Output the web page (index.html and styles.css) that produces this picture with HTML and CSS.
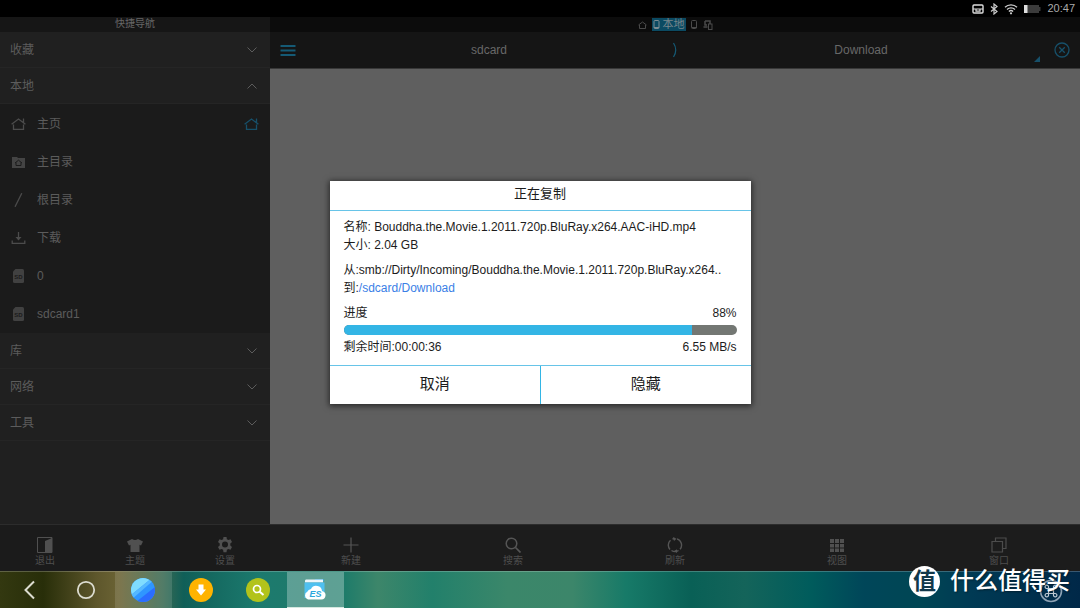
FILE: index.html
```html
<!DOCTYPE html>
<html lang="zh-CN">
<head>
<meta charset="utf-8">
<title>文件管理器</title>
<link rel="stylesheet" href="styles.css">
</head>
<body>
<div class="screen">
  <header class="status">
    <svg width="12" height="10" viewBox="0 0 12 10"><rect x="1" y="1" width="10" height="8" rx="1" fill="none" stroke="#ddd" stroke-width="1.400"/><path d="M1 5h10M4 5v2.200h4V5" fill="none" stroke="#ddd" stroke-width="1.200"/></svg>
    <svg width="8" height="12" viewBox="0 0 8 12"><path d="M1 3.500l6 5-3 2.500V1l3 2.500-6 5" fill="none" stroke="#ccc" stroke-width="1.200"/></svg>
    <svg width="14" height="12" viewBox="0 0 14 12"><g fill="none" stroke="#ccc" stroke-width="1.300"><path d="M1 4.300a8.500 8.500 0 0 1 12 0M3 6.500a5.700 5.700 0 0 1 8 0M4.900 8.500a3 3 0 0 1 4.200 0"/></g><circle cx="7" cy="10.300" r="1.100" fill="#ccc"/></svg>
    <svg width="17" height="10" viewBox="0 0 17 10"><path d="M0 1h15v2h1.500v4H15v2H0z" fill="#3b3b3b"/><path d="M0 1h3.500v8H0z" fill="#ddd"/></svg>
    <time>20:47</time>
  </header>

  <main class="app">
    <nav class="side">
      <h2 class="side-title">快捷导航</h2>
      <button class="group">收藏<svg width="10" height="6" viewBox="0 0 10 6"><path d="M.5.5L5 5 9.500.5"/></svg></button>
      <button class="group">本地<svg width="10" height="6" viewBox="0 0 10 6"><path d="M.5 5.500L5 1l4.500 4.500"/></svg></button>
      <ul class="items">
        <li><a href="#home"><svg class="line" width="15" height="14" viewBox="0 0 15 14"><path d="M.6 7.300L7.500 2l6.900 5.300M2.500 7.500v4.800h10V7.500M12.500 5.500V1.500"/></svg>主页<svg class="line blue" width="15" height="14" viewBox="0 0 15 14"><path d="M.6 7.300L7.500 2l6.900 5.300M2.500 7.500v4.800h10V7.500M12.500 5.500V1.500"/></svg></a></li>
        <li><a href="#main"><svg width="15" height="14" viewBox="0 0 15 14"><path d="M1 2h5l1 1h7v10H1z" fill="#444"/><path d="M4 8l3.500-2.800L11 8M5 7.500v3h5v-3" fill="none" stroke="#1b1b1b"/></svg>主目录</a></li>
        <li><a href="#root"><svg class="line" width="15" height="14" viewBox="0 0 15 14"><path d="M4 13.800L10.800.2"/></svg>根目录</a></li>
        <li><a href="#down"><svg class="line" width="15" height="14" viewBox="0 0 15 14"><path d="M1.200 9.500v2.800h12.600V9.500M7.500 1V7"/><path d="M4.500 6h6l-3 3.500z" fill="#4c4c4c" stroke="none"/></svg>下载</a></li>
        <li><a href="#sd0"><svg width="15" height="14" viewBox="0 0 15 14"><path d="M4.500 0h7q1.500 0 1.500 1.500v11q0 1.500-1.500 1.500h-8q-1.500 0-1.500-1.500V2.500z" fill="#414141"/><text x="7.500" y="9.500" class="sd">SD</text></svg>0</a></li>
        <li><a href="#sd1"><svg width="15" height="14" viewBox="0 0 15 14"><path d="M4.500 0h7q1.500 0 1.500 1.500v11q0 1.500-1.500 1.500h-8q-1.500 0-1.500-1.500V2.500z" fill="#414141"/><text x="7.500" y="9.500" class="sd">SD</text></svg>sdcard1</a></li>
      </ul>
      <button class="group">库<svg width="10" height="6" viewBox="0 0 10 6"><path d="M.5.5L5 5 9.500.5"/></svg></button>
      <button class="group">网络<svg width="10" height="6" viewBox="0 0 10 6"><path d="M.5.5L5 5 9.500.5"/></svg></button>
      <button class="group">工具<svg width="10" height="6" viewBox="0 0 10 6"><path d="M.5.5L5 5 9.500.5"/></svg></button>
      <div class="tools side-tools">
        <button><svg width="16" height="16" viewBox="0 0 16 16"><path d="M.5.500h14.500v15H.5z" fill="none" stroke="#505050"/><path d="M8 4l7-3v14.500H8z" fill="#505050"/></svg>退出</button>
        <button><svg width="16" height="16" viewBox="0 0 16 16"><path d="M5 2q3 2 6 0l5 2.500-2 4-1.500-.8V15h-9V7.700L2 8.500l-2-4z" fill="#505050"/></svg>主题</button>
        <button><svg width="16" height="16" viewBox="0 0 16 16"><path d="M6.500 0h3l.4 2.200 1.500.9 2.100-.8L15 4.900l-1.700 1.500v2.200l1.700 1.500-1.500 2.600-2.100-.8-1.500.9-.4 2.400h-3l-.4-2.400-1.500-.9-2.100.8L1 10.100l1.700-1.500V6.400L1 4.900l1.500-2.600 2.100.8 1.500-.9z" fill="#505050"/><circle cx="8" cy="7.500" r="3" fill="#1b1b1b"/></svg>设置</button>
      </div>
    </nav>

    <section class="content">
      <div class="tabs">
        <svg width="9" height="8" viewBox="0 0 9 8"><path d="M.5 4l4-3 4 3M1.500 4v3.500h6V4" fill="none" stroke="#4a4a4a"/></svg>
        <span class="tab"><svg width="7" height="9" viewBox="0 0 7 9"><rect x="1" y=".5" width="5" height="8" rx="1" fill="none" stroke="#7c8c92"/><path d="M1 7.500h5" stroke="#7c8c92"/></svg>本地</span>
        <svg width="7" height="9" viewBox="0 0 7 9"><rect x=".5" y=".5" width="5" height="8" rx="1" fill="none" stroke="#4a4a4a"/><path d="M1 7.500h5" stroke="#4a4a4a"/></svg>
        <svg width="10" height="10" viewBox="0 0 10 10"><path d="M2 1h5v3M2 1v4h2M.5 7h4" fill="none" stroke="#4a4a4a" stroke-width="1.500"/><rect x="5.500" y="4" width="3.500" height="5.500" fill="#0d0d0d" stroke="#4a4a4a"/></svg>
      </div>
      <div class="path">
        <button class="icon" aria-label="菜单"><svg width="16" height="13" viewBox="0 0 16 13"><path d="M.5 2h15M.5 6.500h15M.5 11h15" stroke="#155a75" stroke-width="2"/></svg></button>
        <div class="crumbs">
          <a href="#sdcard">sdcard</a>
          <svg width="6" height="16" viewBox="0 0 6 16"><path d="M1.500 1Q6 8 1.500 15" fill="none" stroke="#155a75" stroke-width="1.200"/></svg>
          <a href="#download">Download</a>
        </div>
        <svg class="corner" width="6" height="6" viewBox="0 0 6 6"><path d="M6 0v6H0z" fill="#17506a"/></svg>
        <button class="icon" aria-label="关闭"><svg width="16" height="16" viewBox="0 0 16 16"><circle cx="8" cy="8" r="7" fill="none" stroke="#17506a" stroke-width="1.300"/><path d="M5.200 5.200l5.600 5.600M10.800 5.200l-5.600 5.600" stroke="#17506a" stroke-width="1.300"/></svg></button>
      </div>
      <div class="files"></div>
      <div class="tools">
        <button><svg width="16" height="16" viewBox="0 0 16 16"><path d="M8 .5v15M.5 8h15" stroke="#555" stroke-width="1.200"/></svg>新建</button>
        <button><svg width="16" height="16" viewBox="0 0 16 16"><circle cx="6.500" cy="6.500" r="5.300" fill="none" stroke="#555" stroke-width="1.500"/><path d="M10.500 10.500l5 5" stroke="#555" stroke-width="1.700"/></svg>搜索</button>
        <button><svg width="16" height="16" viewBox="0 0 16 16"><path d="M3 12.500A6.500 6.500 0 0 1 3.500 3.300M5.500 2A6.500 6.500 0 0 1 8 1.500M10 1.800A6.500 6.500 0 0 1 13 12.200M11.500 13.500A6.500 6.500 0 0 1 4.500 13.500" fill="none" stroke="#555" stroke-width="1.400"/><path d="M6 0l3.500 1.700L7 4zM10 16l-3-2 3-1.800z" fill="#555"/></svg>刷新</button>
        <button><svg width="16" height="16" viewBox="0 0 16 16"><path d="M1 2h4v4H1zM6 2h4v4H6zM11 2h4v4h-4zM1 7h4v3.500H1zM6 7h4v3.500H6zM11 7h4v3.500h-4zM1 11.500h4V15H1zM6 11.500h4V15H6zM11 11.500h4V15h-4z" fill="#505050"/></svg>视图</button>
        <button><svg width="16" height="16" viewBox="0 0 16 16"><path d="M1 4.500h10.500V15H1zM4.500 4V1H15v10.500h-3.500" fill="none" stroke="#4c4c4c" stroke-width="1.200"/></svg>窗口</button>
      </div>
    </section>

    <div class="overlay">
      <div class="dialog" role="dialog" aria-labelledby="dlg">
        <h1 id="dlg">正在复制</h1>
        <div class="info">
          <p>名称: Bouddha.the.Movie.1.2011.720p.BluRay.x264.AAC-iHD.mp4</p>
          <p>大小: 2.04 GB</p>
          <p class="next">从:smb://Dirty/Incoming/Bouddha.the.Movie.1.2011.720p.BluRay.x264..</p>
          <p>到:<a href="#download">/sdcard/Download</a></p>
          <div class="row next"><label for="bar">进度</label><span>88%</span></div>
          <progress id="bar" value="88.8" max="100"></progress>
          <div class="row"><span>剩余时间:00:00:36</span><span>6.55 MB/s</span></div>
        </div>
        <div class="actions"><button>取消</button><button>隐藏</button></div>
      </div>
    </div>
  </main>

  <footer class="dock">
    <div class="apps">
      <button aria-label="返回"><svg width="24" height="24" viewBox="0 0 24 24"><path d="M17 3.500L8.500 12l8.500 8.500" fill="none" stroke="#dcdcd0" stroke-width="2"/></svg></button>
      <button aria-label="主屏"><svg width="24" height="24" viewBox="0 0 24 24"><circle cx="12" cy="12" r="8.200" fill="none" stroke="#dcdcd0" stroke-width="1.800"/></svg></button>
      <button class="open" aria-label="浏览器"><svg width="24" height="24" viewBox="0 0 24 24"><clipPath id="c"><circle cx="12" cy="12" r="12"/></clipPath><g clip-path="url(#c)"><path d="M0 0h24v24H0z" fill="#2f96ff"/><path d="M0 0h21L0 17z" fill="#7fdcff"/><path d="M21 0L0 17v5L24 1z" fill="#54b8ff"/><path d="M24 9L5 24h19z" fill="#2b6dff"/></g></svg></button>
      <button aria-label="下载"><svg width="24" height="24" viewBox="0 0 24 24"><circle cx="12" cy="12" r="12" fill="#ffb300"/><path d="M9.500 6.500h5v5H17l-5 6-5-6h2.500z" fill="#fff"/></svg></button>
      <button aria-label="搜索"><svg width="24" height="24" viewBox="0 0 24 24"><circle cx="12" cy="12" r="12" fill="#b2c31b"/><circle cx="11" cy="11" r="3.500" fill="none" stroke="#fff" stroke-width="1.700"/><path d="M13.500 13.500l4 3.500" stroke="#fff" stroke-width="2"/></svg></button>
      <button class="open active" aria-label="ES"><svg width="24" height="24" viewBox="0 0 24 24"><path d="M12 1h8q1 0 1 2H12z" fill="#35a8e0"/><path d="M2 3q0-1.500 1-1.500h17v3H2z" fill="#eef6fa"/><path d="M1.500 4.500h20V20h-20z" fill="#4fc0f0"/><path d="M5 21.500a4.300 4.300 0 0 1-.5-8Q5 11.500 8 11q2-4 6.500-3 4 .5 4.500 5 4 1 3.500 4.800-.5 3.700-4 3.700z" fill="#fff"/><text x="12.500" y="19" class="es">ES</text></svg></button>
    </div>
    <button class="round" aria-label="快捷"><svg width="24" height="24" viewBox="0 0 24 24"><circle cx="12" cy="12" r="10.500" fill="none" stroke="#8fa3b5" stroke-width="1.600"/><path d="M9.500 9.500h5v5h-5zM9.500 9.500H8a1.700 1.700 0 1 1 1.500-1.700zM14.500 9.500h1.500a1.700 1.700 0 1 0-1.500-1.700zM9.500 14.500H8a1.700 1.700 0 1 0 1.500 1.700zM14.500 14.500h1.500a1.700 1.700 0 1 1-1.500 1.700z" fill="none" stroke="#c0ccd6" stroke-width="1.200"/></svg></button>
  </footer>
  <div class="mark"><span class="seal">值</span><span>什么值得买</span></div>
</div>
</body>
</html>
```

FILE: styles.css
```css
* { box-sizing: border-box; margin: 0; padding: 0; }
body {
  font: 12px/18px "Liberation Sans", "Noto Sans CJK SC", sans-serif;
  color: #5c5c5c;
  background: #000;
}
button { font: inherit; color: inherit; background: none; border: 0; }
a { color: inherit; text-decoration: none; }
ul { list-style: none; }
svg { display: block; flex: none; }

.screen { position: relative; display: flex; flex-direction: column; min-height: 100vh; }
.status {
  display: flex; align-items: center; justify-content: flex-end; gap: 6px;
  height: 17px; padding-right: 5px; color: #aaa; font-size: 11px; line-height: 17px;
}

.app { position: relative; flex: 1; display: grid; grid-template-columns: 270px 1fr; }
.side { display: flex; flex-direction: column; background: #202020; }
.side-title {
  height: 15px; font-size: 10px; line-height: 14px; font-weight: 400;
  text-align: center; color: #666; background: #161616;
}
.group {
  display: flex; align-items: center; justify-content: space-between;
  height: 36px; padding: 1px 13px 0 10px; border-bottom: 1px solid #252525;
}
.group svg { fill: none; stroke: #5c5c5c; }
.items { padding-top: 1px; background: #1b1b1b; }
.items a { display: flex; align-items: center; gap: 11px; height: 38px; padding: 0 11px; }
.line { fill: none; stroke: #4c4c4c; stroke-width: 1.3px; }
.blue { margin-left: auto; stroke: #17506a; }
.sd { font-size: 6px; font-weight: 700; text-anchor: middle; fill: #1b1b1b; }

.tools {
  display: grid; grid-auto-flow: column; grid-auto-columns: 1fr;
  height: 47px; background: #1c1c1c; border-top: 1px solid #2c2c2c;
}
.side-tools { margin-top: auto; background: #1b1b1b; }
.tools button {
  display: flex; flex-direction: column; align-items: center;
  padding-top: 12px; font-size: 10px; line-height: 15px; color: #4e4e4e;
}

.content { display: flex; flex-direction: column; }
.tabs {
  display: flex; align-items: center; justify-content: center; gap: 5px;
  height: 15px; background: #0c0c0c;
}
.tab {
  display: flex; align-items: center; gap: 3px; height: 13px; padding: 0 1px;
  font-size: 11px; line-height: 13px; color: #77868c; background: #0b4a62;
}
.path {
  position: relative; display: flex; align-items: center; justify-content: space-between;
  height: 37px; padding: 0 10px; background: #151515; border-bottom: 1px solid #383838;
}
.crumbs { flex: 1; display: flex; align-items: center; padding: 0 10px; }
.crumbs a { flex: 1; text-align: center; color: #686868; }
.corner { position: absolute; right: 40px; bottom: 6px; }
.files { flex: 1; background: #5f5f5f; }

.overlay {
  position: absolute; inset: 0; display: flex; align-items: center; justify-content: center;
  padding-bottom: 3px;
}
.dialog { width: 421px; background: #fff; color: #1c1c1c; box-shadow: 0 1px 6px 1px #0009; }
.dialog h1 {
  font-size: 13px; line-height: 26px; font-weight: 400; text-align: center;
  padding-bottom: 3px; border-bottom: 1px solid #67c4e8;
}
.info { padding: 7px 14px 9px; }
.info p { white-space: nowrap; }
.info a { color: #3a80e6; }
.next { margin-top: 7px; }
.row { display: flex; justify-content: space-between; }
progress {
  display: block; appearance: none; width: 100%; height: 10px; margin: 3px 0;
  border: 0; border-radius: 5px; overflow: hidden;
}
progress::-webkit-progress-bar { background: #737773; }
progress::-webkit-progress-value { background: #33b5e5; }
.actions { display: grid; grid-template-columns: 1fr 1fr; border-top: 1px solid #67c4e8; }
.actions button { height: 38px; padding-bottom: 3px; font-size: 15px; }
.actions button + button { border-left: 1px solid #33b5e5; }

.dock {
  display: flex; justify-content: space-between; height: 37px;
  border-top: 1px solid #ffffff38;
  background: linear-gradient(90deg, #333810 0, #282e09 4%, #5e572c 9%, #6b6334 11%, #3b6a52 15%, #105f58 17%, #1c7a6e 24%, #1f7a6a 29%, #1f7c6a 32%, #3d866a 35%, #22806b 40%, #3b876a 47%, #3c866a 53%, #177a68 58%, #096056 64%, #14645a 69%, #005c5c 75%, #004659 80%, #004654 85%, #003a54 90%, #002848 100%);
}
.apps { display: grid; grid-template-columns: repeat(6, 1fr); width: 344px; }
.apps button { display: grid; place-items: center; }
.open { background: #ffffff20; }
.apps .active { background: #ffffff48; border-bottom: 1px solid #d5e8e0; }
.round { padding: 7px 17px; }
.es { font-size: 9px; font-weight: 700; font-style: italic; text-anchor: middle; fill: #2da7dc; }

.mark {
  position: absolute; right: 10px; bottom: 10px; display: flex; align-items: center; gap: 10px;
  font-size: 24px; line-height: 34px; color: #fff; white-space: nowrap; font-weight: 500;
  text-shadow: 1px 1px 2px #0006; pointer-events: none;
}
.seal {
  width: 31px; height: 31px; border-radius: 50%; background: #fff; color: #12384a;
  font-size: 23px; font-weight: 700; line-height: 30px; text-align: center; text-shadow: none;
}
```
